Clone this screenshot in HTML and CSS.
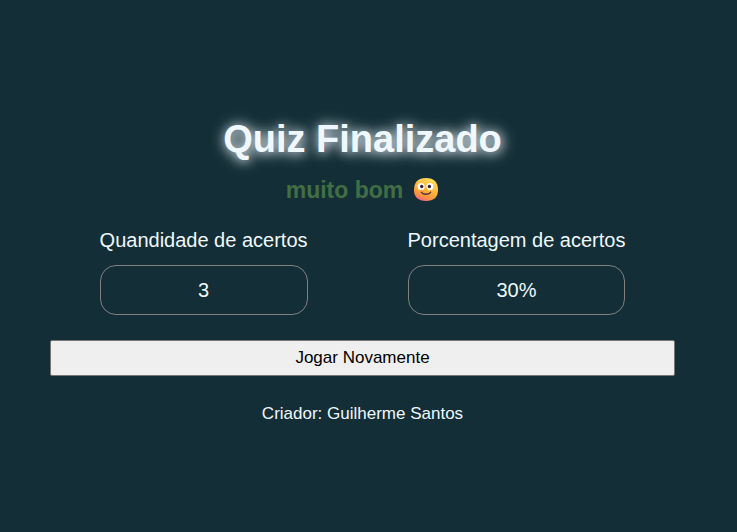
FILE: index.html
```html
<!DOCTYPE html>
<html lang="pt-BR">
<head>
  <meta charset="utf-8">
  <meta name="viewport" content="width=device-width, initial-scale=1">
  <title>Quiz Finalizado</title>
  <link rel="stylesheet" href="styles.css">
</head>
<body>
  <main class="result">
    <h1 class="title">Quiz Finalizado</h1>
    <h2 class="message">
      <span>muito bom</span>
      <svg class="face" viewBox="0 0 26 26" role="img" aria-label="rosto sorrindo">
        <defs>
          <linearGradient id="skin" x1="0.75" y1="0" x2="0.3" y2="1">
            <stop offset="0" stop-color="#ffe05a"/>
            <stop offset="0.5" stop-color="#fdb53c"/>
            <stop offset="0.8" stop-color="#fb9340"/>
            <stop offset="1" stop-color="#f4608a"/>
          </linearGradient>
        </defs>
        <path fill="url(#skin)" d="M13 1C21 1 25 5 25 13c0 7-4 11-12 11S1 20 1 13C1 5 5 1 13 1z"/>
        <circle cx="8.1" cy="9.4" r="3.5" fill="#fff"/>
        <circle cx="16.9" cy="9.4" r="3.5" fill="#fff"/>
        <circle cx="8.7" cy="9.5" r="1.7" fill="#35233c"/>
        <circle cx="16.4" cy="9.5" r="1.7" fill="#35233c"/>
        <path d="M8.4 15.3c2 2.6 7.2 2.6 9.2 0" fill="none" stroke="#53303a" stroke-width="1.3" stroke-linecap="round"/>
      </svg>
    </h2>
    <dl class="scores">
      <div class="score">
        <dt>Quandidade de acertos</dt>
        <dd class="value">3</dd>
      </div>
      <div class="score">
        <dt>Porcentagem de acertos</dt>
        <dd class="value">30%</dd>
      </div>
    </dl>
    <button class="replay" type="button">Jogar Novamente</button>
    <footer class="credit">Criador: Guilherme Santos</footer>
  </main>
</body>
</html>
```
FILE: styles.css
```css
* {
  box-sizing: border-box;
  margin: 0;
  padding: 0;
}

body {
  min-height: 100vh;
  display: flex;
  align-items: center;
  padding: 8px 62px 0 50px;
  background: #132e36;
  color: aliceblue;
  font-family: "Liberation Sans", Arial, sans-serif;
  font-size: 20px;
}

.result {
  flex: 1;
  display: flex;
  flex-direction: column;
  text-align: center;
}

.title {
  font-size: 38px;
  line-height: 46px;
  text-shadow: 1px 1px 15px aliceblue, 1px 1px 10px rgb(240 248 255 / 50%);
}

.message {
  display: flex;
  justify-content: center;
  align-items: center;
  gap: 10px;
  margin-top: 14px;
  color: #426e45;
  font-size: 23px;
  line-height: 28px;
}

.face {
  width: 26px;
  height: 26px;
}

.scores {
  display: flex;
  flex-wrap: wrap;
  justify-content: center;
  gap: 24px 100px;
  margin-top: 24px;
  line-height: 24px;
}

.value {
  margin-top: 13px;
  padding: 12px;
  border: 1px solid gray;
  border-radius: 16px;
}

.replay {
  margin-top: 25px;
  padding: 7px;
  border: 1px solid #767676;
  border-radius: 2px;
  background: #efefef;
  color: #000;
  font-family: inherit;
  font-size: 17px;
  line-height: 20px;
}

.credit {
  margin-top: 28px;
  font-size: 17px;
  line-height: 20px;
}
```
